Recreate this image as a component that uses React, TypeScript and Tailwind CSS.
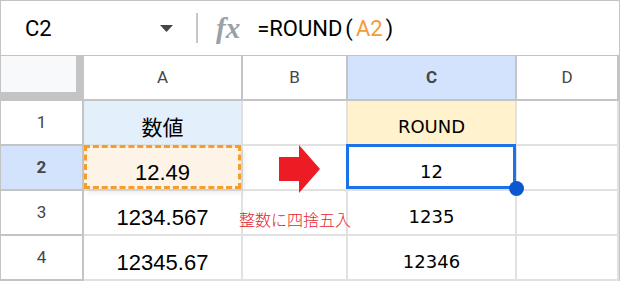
import React from "react";

const grid = "grid grid-cols-[83px_159px_105px_169px_1fr]";
const headCell = "flex items-center justify-center border-r-2 border-b-2 border-[#c4c4c4] text-[17px] text-[#444746]";
const rowHead = "flex items-center justify-center border-r-2 border-b-2 border-[#c4c4c4] text-[17px] text-[#444746]";
const dataCell = "relative flex items-end justify-center border-r-2 border-b-2 border-[#e1e1e1]";
const numA = "font-['Liberation_Sans',Arial,sans-serif] text-[22px] leading-[22px] text-black pb-[5px]";
const numC = "font-['DejaVu_Sans',sans-serif] text-[18px] leading-[18px] text-black pb-[8px]";

export default function App() {
  return (
    <div className="relative h-[281px] w-[620px] overflow-hidden border-x border-t border-[#c4c4c4] bg-white font-['Roboto',sans-serif]">
      {/* formula bar */}
      <div className="flex h-[55px] items-center border-b border-[#c4c4c4]">
        <div className="w-[146px] pl-[24px] text-[22px] text-black">C2</div>
        <svg width="13" height="7" viewBox="0 0 13 7" className="ml-[13px]">
          <polygon points="0,0 13,0 6.5,7" fill="#444746" />
        </svg>
        <div className="ml-[23px] h-[30px] w-[2px] bg-[#c7c7c7]" />
        <div className="ml-[18px] font-['Liberation_Serif',serif] text-[29px] font-bold italic leading-none text-[#9aa0a6]">fx</div>
        <div className="ml-[17px] text-[22px] text-black">
          =ROUND<span className="mx-[3px]">(</span>
          <span className="text-[#f29b38]">A2</span>
          <span className="mx-[3px]">)</span>
        </div>
      </div>

      {/* column headers */}
      <div className={`${grid} h-[45px]`}>
        <div className="border-r-[8px] border-b-[9px] border-[#c4c4c4] bg-[#f8f9fa]" />
        <div className={headCell}>A</div>
        <div className={headCell}>B</div>
        <div className={`${headCell} bg-[#d3e3fd] font-bold text-[#041e49]`}>C</div>
        <div className={headCell}>D</div>
      </div>

      {/* row 1 */}
      <div className={`${grid} h-[45px]`}>
        <div className={rowHead}>1</div>
        <div className={`${dataCell} bg-[#e3effb]`}>
          <span className="pb-[6px] font-['Noto_Sans_CJK_JP',sans-serif] text-[21px] leading-[24px] text-black">数値</span>
        </div>
        <div className={dataCell} />
        <div className={`${dataCell} bg-[#fff2cc]`}>
          <span className={numC}>ROUND</span>
        </div>
        <div className={dataCell} />
      </div>

      {/* row 2 */}
      <div className={`${grid} h-[45px]`}>
        <div className={`${rowHead} bg-[#d3e3fd] font-bold text-[#041e49]`}>2</div>
        <div className={`${dataCell} bg-[#fdf3e6]`}>
          <div className="absolute -top-px bottom-0 left-0 right-0 border-[3px] border-dashed border-[#f59d2d] shadow-[3px_4px_5px_rgba(0,0,0,0.08)]" />
          <span className={`relative ${numA}`}>12.49</span>
        </div>
        <div className={dataCell} />
        <div className={dataCell}>
          <div className="absolute -left-[2px] -right-px -top-[2px] bottom-0 border-[3px] border-[#1a73e8]" />
          <span className={numC}>12</span>
          <div className="absolute left-[161px] top-[35px] z-10 h-[15px] w-[15px] rounded-full bg-[#0b57d0]" />
        </div>
        <div className={dataCell} />
      </div>

      {/* row 3 */}
      <div className={`${grid} h-[45px]`}>
        <div className={rowHead}>3</div>
        <div className={dataCell}>
          <span className={numA}>1234.567</span>
        </div>
        <div className={dataCell} />
        <div className={dataCell}>
          <span className={numC}>1235</span>
        </div>
        <div className={dataCell} />
      </div>

      {/* row 4 */}
      <div className={`${grid} h-[45px]`}>
        <div className={rowHead}>4</div>
        <div className={dataCell}>
          <span className={numA}>12345.67</span>
        </div>
        <div className={dataCell} />
        <div className={dataCell}>
          <span className={numC}>12346</span>
        </div>
        <div className={dataCell} />
      </div>

      {/* annotation */}
      <svg width="41" height="48" viewBox="0 0 41 48" className="absolute left-[278px] top-[144px]">
        <polygon points="0,12 20,12 20,0 41,24 20,48 20,36 0,36" fill="#ed1c24" />
      </svg>
      <div className="absolute left-[238px] top-[208px] font-['Noto_Sans_CJK_JP',sans-serif] text-[16px] font-light leading-[20px] text-[#e8232f]">
        整数に四捨五入
      </div>
    </div>
  );
}
